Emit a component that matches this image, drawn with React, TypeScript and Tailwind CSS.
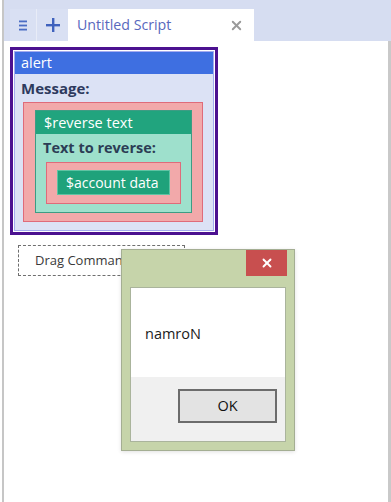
import { X } from "lucide-react"

const font = "font-['Open_Sans','Noto_Sans',sans-serif]"

function TabBar() {
  return (
    <div className="flex h-[41px] items-end bg-[#d6ddf1] pl-[6px]">
      <button className="flex h-[32px] w-[27px] items-center justify-center border-r border-[#e8ecf7] bg-[#d9e0f3]">
        <svg width="10" height="13" viewBox="0 0 10 13">
          <rect x="1" y="1.5" width="8" height="1.8" fill="#4a6cc4" />
          <rect x="1" y="5.6" width="8" height="1.8" fill="#4a6cc4" />
          <rect x="1" y="9.7" width="8" height="1.8" fill="#4a6cc4" />
        </svg>
      </button>
      <button className="flex h-[32px] w-[31px] items-center justify-center bg-[#d9e0f3]">
        <svg width="16" height="16" viewBox="0 0 16 16">
          <rect x="7" y="1" width="2.4" height="14" fill="#3f62bd" />
          <rect x="1" y="7" width="14" height="2.4" fill="#3f62bd" />
        </svg>
      </button>
      <div className="flex h-[32px] w-[186px] items-center justify-between bg-white pl-[9px] pr-[10px]">
        <span className="text-[14.2px] text-[#5868bd]">Untitled Script</span>
        <X className="h-[15px] w-[15px] text-[#9a9a9a]" strokeWidth={3} />
      </div>
    </div>
  )
}

function AlertBlock() {
  return (
    <div className="ml-[6px] mt-[6px] w-[208px] border-[3px] border-[#4c1190] bg-white p-[1px]">
      <div className="border border-[#a3abef] bg-[#dce2f5]">
        <div className="flex h-[22px] items-center bg-[#3e6fe1] pl-[6px] text-[14.5px] text-white">alert</div>
        <div className="flex h-[28px] items-center pl-[6px] text-[15px] font-bold text-[#2e3a5e]">Message:</div>
        <div className="mb-[8px] ml-[8px] mr-[10px] border border-[#df6b7a] bg-[#f2a9aa] pb-[8px] pl-[11px] pr-[10px] pt-[7px]">
          <div className="border border-[#3d9c84] bg-[#9ee0cc]">
            <div className="flex h-[23px] items-center bg-[#21a47e] pl-[8px] text-[14.5px] text-white">$reverse text</div>
            <div className="flex h-[28px] items-center pl-[7px] text-[14.5px] font-bold text-[#2c3d55]">Text to reverse:</div>
            <div className="mb-[8px] ml-[10px] mr-[10px] border border-[#df6b7a] bg-[#f2a9aa] pb-[8px] pl-[10px] pr-[10px] pt-[7px]">
              <div className="flex h-[25px] items-center border border-[#5fc3a3] bg-[#1fa27b] pl-[8px] text-[14px] text-white">
                $account data
              </div>
            </div>
          </div>
        </div>
      </div>
    </div>
  )
}

function MessageDialog() {
  return (
    <div className="absolute left-[121px] top-[249px] h-[202px] w-[174px] border border-[#a4ae93] bg-[#c6d4aa] shadow-[0_1px_4px_rgba(0,0,0,0.12)]">
      <div className="flex h-[37px] justify-end pr-[7px]">
        <button className="flex h-[26px] w-[41px] items-center justify-center bg-[#c84f4f]">
          <X className="h-[14px] w-[14px] text-white" strokeWidth={3.2} />
        </button>
      </div>
      <div className="mx-[8px] flex h-[155px] flex-col border border-[#aab49c]">
        <div className="flex h-[89px] items-center bg-white pl-[14px] pt-[2px] text-[14.5px] text-[#1b1b1b]">namroN</div>
        <div className="flex flex-1 justify-end bg-[#f0f0f0] pr-[8px] pt-[12px]">
          <button className="flex h-[34px] w-[99px] items-center justify-center border-2 border-[#6c6c6c] bg-[#e3e3e3] text-[14.5px] text-[#111]">
            OK
          </button>
        </div>
      </div>
    </div>
  )
}

export default function App() {
  return (
    <div className={`relative h-[502px] w-[391px] overflow-hidden bg-white pl-[2px] ${font}`}>
      <div className="flex h-full flex-col border-l-2 border-[#c6c6c6]">
        <TabBar />
        <div className="flex-1 border-r-[3px] border-[#c9c9c9]">
          <AlertBlock />
          <div className="ml-[14px] mt-[10px] flex h-[31px] w-[167px] items-center border border-dashed border-[#6f6f6f] pl-[16px] text-[13px] text-[#3a3a3a]">
            Drag Commands Here
          </div>
        </div>
      </div>
      <MessageDialog />
    </div>
  )
}
